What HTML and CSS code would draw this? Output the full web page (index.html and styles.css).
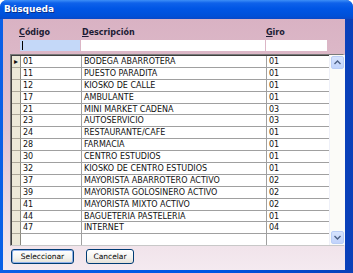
FILE: index.html
```html
<!DOCTYPE html>
<html lang="es">
<head>
  <meta charset="UTF-8">
  <title>Búsqueda</title>
  <link rel="stylesheet" href="styles.css">
</head>
<body>
  <div class="window">
    <div class="titlebar">Búsqueda</div>

    <div class="client">
      <div class="labels">
        <span class="lbl lbl-code"><u>C</u>ódigo</span>
        <span class="lbl lbl-desc"><u>D</u>escripción</span>
        <span class="lbl lbl-giro"><u>G</u>iro</span>
      </div>

      <div class="filters">
        <div class="box box-code focused"><span class="caret"></span></div>
        <div class="box box-desc"></div>
        <div class="box box-giro"></div>
      </div>

      <div class="grid">
        <div class="rows">
          <div class="row current"><span class="ind">&#9656;</span><span class="c code">01</span><span class="c desc">BODEGA ABARROTERA</span><span class="c giro">01</span></div>
          <div class="row"><span class="ind"></span><span class="c code">11</span><span class="c desc">PUESTO PARADITA</span><span class="c giro">01</span></div>
          <div class="row"><span class="ind"></span><span class="c code">12</span><span class="c desc">KIOSKO DE CALLE</span><span class="c giro">01</span></div>
          <div class="row"><span class="ind"></span><span class="c code">17</span><span class="c desc">AMBULANTE</span><span class="c giro">01</span></div>
          <div class="row"><span class="ind"></span><span class="c code">21</span><span class="c desc">MINI MARKET CADENA</span><span class="c giro">03</span></div>
          <div class="row"><span class="ind"></span><span class="c code">23</span><span class="c desc">AUTOSERVICIO</span><span class="c giro">03</span></div>
          <div class="row"><span class="ind"></span><span class="c code">24</span><span class="c desc">RESTAURANTE/CAFE</span><span class="c giro">01</span></div>
          <div class="row"><span class="ind"></span><span class="c code">28</span><span class="c desc">FARMACIA</span><span class="c giro">01</span></div>
          <div class="row"><span class="ind"></span><span class="c code">30</span><span class="c desc">CENTRO ESTUDIOS</span><span class="c giro">01</span></div>
          <div class="row"><span class="ind"></span><span class="c code">32</span><span class="c desc">KIOSKO DE CENTRO ESTUDIOS</span><span class="c giro">01</span></div>
          <div class="row"><span class="ind"></span><span class="c code">37</span><span class="c desc">MAYORISTA ABARROTERO ACTIVO</span><span class="c giro">02</span></div>
          <div class="row"><span class="ind"></span><span class="c code">39</span><span class="c desc">MAYORISTA GOLOSINERO ACTIVO</span><span class="c giro">02</span></div>
          <div class="row"><span class="ind"></span><span class="c code">41</span><span class="c desc">MAYORISTA MIXTO ACTIVO</span><span class="c giro">02</span></div>
          <div class="row"><span class="ind"></span><span class="c code">44</span><span class="c desc">BAGUETERIA PASTELERIA</span><span class="c giro">01</span></div>
          <div class="row"><span class="ind"></span><span class="c code">47</span><span class="c desc">INTERNET</span><span class="c giro">04</span></div>
          <div class="row empty"><span class="ind"></span><span class="c code"></span><span class="c desc"></span><span class="c giro"></span></div>
        </div>

        <div class="scrollbar">
          <div class="sb-btn">
            <svg width="7" height="5" viewBox="0 0 7 5"><path d="M0.5 4 L3.5 1 L6.5 4" fill="none" stroke="#4d6185" stroke-width="1.4"/></svg>
          </div>
          <div class="sb-track"></div>
          <div class="sb-btn">
            <svg width="7" height="5" viewBox="0 0 7 5"><path d="M0.5 1 L3.5 4 L6.5 1" fill="none" stroke="#4d6185" stroke-width="1.4"/></svg>
          </div>
        </div>
      </div>

      <div class="buttons">
        <button class="btn default">Seleccionar</button>
        <button class="btn cancel">Cancelar</button>
      </div>
    </div>
  </div>
</body>
</html>
```

FILE: styles.css
```css
body {
  margin: 0;
  font-family: 'DejaVu Sans', sans-serif;
  background-color: #fff;
}
.window {
  width: 353px;
  height: 273px;
  display: flex;
  flex-direction: column;
  background: linear-gradient(90deg, #0a5fe6 0, #0054e3 60%, #0a3fb8 100%);
  border-radius: 7px 7px 0 0;
  overflow: hidden;
}
/* Title bar */
.titlebar {
  height: 19px;
  flex: none;
  padding-left: 4px;
  line-height: 19px;
  font-size: 9px;
  font-weight: bold;
  color: #fff;
  background: linear-gradient(#3d8ff7 0, #0f62ea 3px, #0056e5 45%, #0050d8 85%, #0a48c6 100%);
  text-shadow: 1px 1px 0 #0b2f8a;
}
.client {
  flex: 1;
  margin: 0 8px 3px 3px;
  background: linear-gradient(#d9b2c3 0, #e2c4d1 45%, #f4eaf0 100%);
  position: relative;
  display: flex;
  flex-direction: column;
}
/* Labels and filter boxes */
.labels {
  height: 11px;
  margin-top: 8px;
  position: relative;
  font-size: 8px;
  font-weight: bold;
  color: #1c1c34;
}
.lbl {
  position: absolute;
  top: 0;
  line-height: 11px;
}
.lbl-code { left: 16px; }
.lbl-desc { left: 79px; }
.lbl-giro { left: 263px; }
.filters {
  display: flex;
  gap: 1px;
  margin: 2px 0 0 17px;
  height: 11px;
}
.box {
  background-color: #fff;
  height: 11px;
  position: relative;
}
.box-code { width: 60px; }
.box-desc { width: 184px; }
.box-giro { width: 61px; }
.box.focused { background-color: #c4d8f8; }
.caret {
  position: absolute;
  left: 2px;
  top: 1px;
  width: 1px;
  height: 9px;
  background-color: #000;
}
/* Grid */
.grid {
  margin: 3px 1px 0 7px;
  height: 192px;
  display: flex;
  border-top: 1px solid #7a7a7a;
  border-left: 1px solid #7a7a7a;
  border-right: 1px solid #c8c8c8;
  border-bottom: 1px solid #c8c8c8;
  box-shadow: inset 1px 1px 0 #404040;
  background-color: #fff;
  box-sizing: border-box;
}
.rows {
  flex: 1;
  display: flex;
  flex-direction: column;
  padding-top: 1px;
  padding-left: 1px;
}
.row {
  display: flex;
  height: 11.9px;
  flex: none;
  font-size: 8px;
  line-height: 11px;
  color: #111;
}
.row.empty { flex: 1; }
.ind {
  width: 8px;
  flex: none;
  background-color: #ece9d8;
  border-right: 1px solid #8c8a80;
  border-bottom: 1px solid #aca899;
  font-size: 8px;
  line-height: 11px;
  text-align: center;
  overflow: hidden;
}
.row.empty .ind { border-bottom: none; }
.c {
  border-right: 1px solid #a0a0a0;
  border-bottom: 1px solid #a0a0a0;
  padding-left: 2px;
  box-sizing: border-box;
  white-space: nowrap;
  overflow: hidden;
}
.row.empty .c { border-bottom: none; }
.code { width: 61px; }
.desc { width: 185px; }
.giro { width: 62px; border-right: none; }
/* Scrollbar */
.scrollbar {
  width: 15px;
  flex: none;
  display: flex;
  flex-direction: column;
  background-color: #fbfbf8;
  border-left: 1px solid #eef0f8;
}
.sb-btn {
  height: 11px;
  margin: 1px 1px;
  border-radius: 2px;
  background: linear-gradient(#d6e3fd, #c1d3fb);
  border: 1px solid #b9cdf6;
  display: flex;
  align-items: center;
  justify-content: center;
}
.sb-track { flex: 1; }
/* Buttons */
.buttons {
  display: flex;
  gap: 12px;
  margin: 3px 0 0 8px;
}
.btn {
  height: 15px;
  padding: 0;
  font-family: 'DejaVu Sans', sans-serif;
  font-size: 7.5px;
  color: #000;
  border: 1px solid #003c74;
  border-radius: 3px;
  background: linear-gradient(#ffffff, #f3f2ee 60%, #e3e0d6 100%);
}
.btn.default {
  width: 63px;
  box-shadow: inset 0 0 0 1px #8fb0ea;
}
.btn.cancel { width: 48px; }
```
